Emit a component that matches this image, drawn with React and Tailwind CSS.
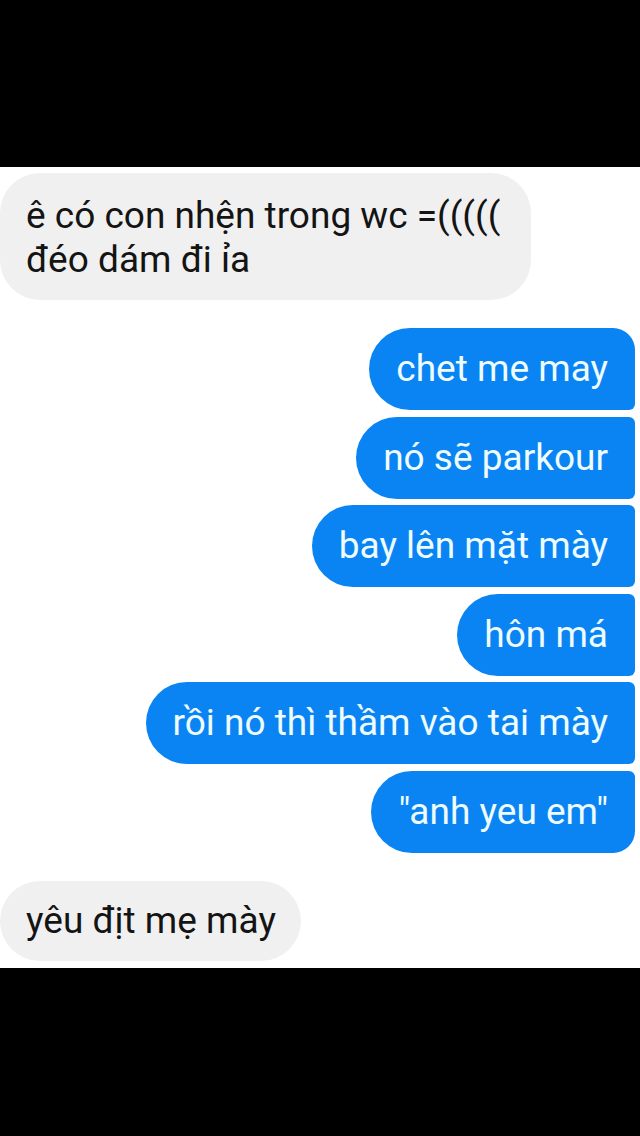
import React from "react";

const font = { fontFamily: "Roboto, 'Noto Sans', sans-serif" };

const sent = [
  { text: "chet me may", shape: "rounded-l-[41px] rounded-tr-[22px] rounded-br-[6px]" },
  { text: "nó sẽ parkour", shape: "rounded-l-[41px] rounded-r-[6px]" },
  { text: "bay lên mặt mày", shape: "rounded-l-[41px] rounded-r-[6px]" },
  { text: "hôn má", shape: "rounded-l-[41px] rounded-r-[6px]" },
  { text: "rồi nó thì thầm vào tai mày", shape: "rounded-l-[41px] rounded-r-[6px]" },
  { text: "\"anh yeu em\"", shape: "rounded-l-[41px] rounded-tr-[6px] rounded-br-[22px]" },
];

function Received({ children, className = "" }) {
  return (
    <div
      className={`w-fit rounded-[40px] bg-[#f0f0f0] pl-[26px] text-[37px] leading-[44px] text-[#141414] ${className}`}
    >
      {children}
    </div>
  );
}

export default function App() {
  return (
    <div className="flex h-[1136px] w-[640px] flex-col bg-black" style={font}>
      <div className="h-[167px] shrink-0 bg-black" />

      <div className="flex h-[801px] shrink-0 flex-col bg-white pt-[6px]">
        <Received className="pr-[31px]">
          <div className="pt-[21px] pb-[18px]">
            ê có con nhện trong wc =(((((
            <br />
            đéo dám đi ỉa
          </div>
        </Received>

        <div className="mt-[28px] flex flex-col items-end gap-[6.5px] pr-[5px]">
          {sent.map((m) => (
            <div
              key={m.text}
              className={`h-[82px] bg-[#0b84f3] px-[27px] pt-[19px] text-[37px] leading-[44px] text-[#eefcff] ${m.shape}`}
            >
              {m.text}
            </div>
          ))}
        </div>

        <div className="mt-[28px]">
          <Received className="pr-[25px]">
            <div className="pt-[18px] pb-[18px]">yêu địt mẹ mày</div>
          </Received>
        </div>
      </div>

      <div className="flex-1 bg-black" />
    </div>
  );
}
